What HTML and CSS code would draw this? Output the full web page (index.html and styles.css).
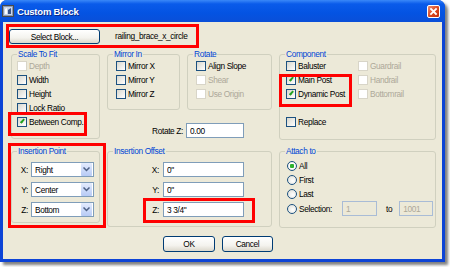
FILE: index.html
```html
<!DOCTYPE html>
<html lang="en">
<head>
  <meta charset="UTF-8">
  <title>Custom Block</title>
  <link rel="stylesheet" href="styles.css">
</head>
<body>
  <div class="win">
    <div class="titlebar">
      <svg class="ticon" width="12" height="12" viewBox="0 0 12 12">
        <rect x="0.5" y="0.5" width="11" height="11" fill="#8C9AB4" stroke="#4A4A4A"/>
        <rect x="2" y="2" width="8" height="8" fill="#C9D6EC"/>
        <path d="M3 9 L3 4 L5 3 L5 9 Z" fill="#fff"/>
        <path d="M6 9 L6 5 L9 3 L9 9 Z" fill="#3A5488"/>
      </svg>
      <span class="title">Custom Block</span>
      <span class="close">
        <svg width="11" height="11" viewBox="0 0 11 11"><path d="M3 3 L8 8 M8 3 L3 8" stroke="#fff" stroke-width="1.8" stroke-linecap="square"/></svg>
      </span>
    </div>

    <div class="client">
      <div class="head">
        <button class="btn btn-sel">Select Block...</button>
        <span class="blockname">railing_brace_x_circle</span>
      </div>

      <div class="grid">
        <fieldset class="g scale">
          <legend>Scale To Fit</legend>
          <div class="list">
            <label class="chk dis"><span class="box"></span>Depth</label>
            <label class="chk"><span class="box"></span>Width</label>
            <label class="chk"><span class="box"></span>Height</label>
            <label class="chk"><span class="box"></span>Lock Ratio</label>
            <label class="chk on"><span class="box"></span>Between Comp.</label>
          </div>
        </fieldset>

        <fieldset class="g mirror">
          <legend>Mirror In</legend>
          <div class="list">
            <label class="chk"><span class="box"></span>Mirror X</label>
            <label class="chk"><span class="box"></span>Mirror Y</label>
            <label class="chk"><span class="box"></span>Mirror Z</label>
          </div>
        </fieldset>

        <fieldset class="g rotate">
          <legend>Rotate</legend>
          <div class="list">
            <label class="chk"><span class="box"></span>Align Slope</label>
            <label class="chk dis"><span class="box"></span>Shear</label>
            <label class="chk dis"><span class="box"></span>Use Origin</label>
          </div>
        </fieldset>

        <fieldset class="g comp">
          <legend>Component</legend>
          <div class="cols">
            <label class="chk"><span class="box"></span>Baluster</label>
            <label class="chk dis"><span class="box"></span>Guardrail</label>
            <label class="chk on"><span class="box"></span>Main Post</label>
            <label class="chk dis"><span class="box"></span>Handrail</label>
            <label class="chk on"><span class="box"></span>Dynamic Post</label>
            <label class="chk dis"><span class="box"></span>Bottomrail</label>
            <span></span><span></span>
            <label class="chk"><span class="box"></span>Replace</label>
          </div>
        </fieldset>

        <div class="rotz">
          <span class="lbl">Rotate Z:</span>
          <input class="txt w58" value="0.00">
        </div>

        <fieldset class="g ipoint">
          <legend>Insertion Point</legend>
          <div class="rows">
            <div class="row"><span class="lbl l16">X:</span><div class="dd"><span>Right</span><i><svg width="7" height="5" viewBox="0 0 7 5"><path d="M0.5 0.5 L3.5 3.5 L6.5 0.5" stroke="#4D6185" stroke-width="1.5" fill="none"/></svg></i></div></div>
            <div class="row"><span class="lbl l16">Y:</span><div class="dd"><span>Center</span><i><svg width="7" height="5" viewBox="0 0 7 5"><path d="M0.5 0.5 L3.5 3.5 L6.5 0.5" stroke="#4D6185" stroke-width="1.5" fill="none"/></svg></i></div></div>
            <div class="row"><span class="lbl l16">Z:</span><div class="dd"><span>Bottom</span><i><svg width="7" height="5" viewBox="0 0 7 5"><path d="M0.5 0.5 L3.5 3.5 L6.5 0.5" stroke="#4D6185" stroke-width="1.5" fill="none"/></svg></i></div></div>
          </div>
        </fieldset>

        <fieldset class="g ioff">
          <legend>Insertion Offset</legend>
          <div class="rows">
            <div class="row"><span class="lbl l51">X:</span><input class="txt w81" value="0&quot;"></div>
            <div class="row"><span class="lbl l51">Y:</span><input class="txt w81" value="0&quot;"></div>
            <div class="row"><span class="lbl l51">Z:</span><input class="txt w81" value="3 3/4&quot;"></div>
          </div>
        </fieldset>

        <fieldset class="g attach">
          <legend>Attach to</legend>
          <div class="list">
            <label class="rad on"><span class="dot"></span>All</label>
            <label class="rad"><span class="dot"></span>First</label>
            <label class="rad"><span class="dot"></span>Last</label>
            <div class="rad selrow"><span class="dot"></span><span class="sel-lbl">Selection:</span><input class="txt dis w35" value="1" disabled><span class="to">to</span><input class="txt dis w34" value="1001" disabled></div>
          </div>
        </fieldset>
      </div>

      <div class="btns">
        <button class="btn btn-ok">OK</button>
        <button class="btn btn-cancel">Cancel</button>
      </div>
    </div>

    <!-- red highlight marks drawn over the screenshot -->
    <div class="mark m-head"></div>
    <div class="mark m-between"></div>
    <div class="mark m-post"></div>
    <div class="mark m-ipoint"></div>
    <div class="mark m-z"></div>
  </div>
</body>
</html>
```

FILE: styles.css
```css
*, *::before, *::after { box-sizing:border-box; margin:0; padding:0; }
html, body { width:100%; height:100%; overflow:hidden; background:#fff; }
body { font-family:'Liberation Sans', Arial, sans-serif; font-size:8.3px; letter-spacing:-0.35px; color:#000; }

.win {
  position:relative; width:445px; height:262px;
  display:flex; flex-direction:column;
  background:#0D44D6; border-radius:7px 7px 0 0;
  box-shadow:3px 3px 3px rgba(0,0,0,0.5);
}
.titlebar {
  height:22px; display:flex; align-items:center; padding:0 5px 0 2px;
  background:linear-gradient(#3A88F8, #0A5BEA 18%, #0453E2 60%, #0A4FD8);
  border-radius:7px 7px 0 0; color:#fff;
}
.ticon { margin-right:3px; }
.title { flex:1; font-weight:bold; font-size:9.5px; letter-spacing:-0.2px; text-shadow:1px 1px #0B2A8A; }
.close {
  width:13px; height:13px; display:flex; align-items:center; justify-content:center;
  border:1px solid #fff; border-radius:2px;
  background:linear-gradient(135deg, #EE8A6E, #D9461C 55%, #C2300E);
}

.client {
  flex:1; margin:0 3px 3px; background:#ECE9D8;
  display:flex; flex-direction:column;
}
.head { height:27px; padding:7px 0 0 6px; display:flex; align-items:flex-start; gap:15px; }
.blockname { line-height:15px; }

.btn {
  font:inherit; letter-spacing:inherit; color:#000;
  border:1px solid #003C74; border-radius:3px;
  background:linear-gradient(#fff, #F4F3EE 60%, #DCD8CC);
}
.btn-sel { width:91px; height:15px; }

.grid {
  display:grid; padding-left:8px;
  grid-template-columns:89px 73px 85px 157px; column-gap:7px;
  grid-template-rows:61px 29px auto;
}
.g { border:1px solid #D0D0BF; border-radius:3px; min-width:0; }
.g legend { color:#0046D5; line-height:10px; padding:0 1px; margin-left:5px; }

.scale { grid-column:1; grid-row:1 / 3; height:90px; }
.mirror { grid-column:2; grid-row:1; height:61px; }
.rotate { grid-column:3; grid-row:1; height:61px; }
.comp { grid-column:4; grid-row:1 / 3; height:91px; }
.ipoint { grid-column:1; grid-row:3; height:77px; margin-top:7px; }
.ioff { grid-column:2 / 4; grid-row:3; height:81px; margin-top:7px; }
.attach { grid-column:4; grid-row:3; height:82px; margin-top:7px; }

.list { padding-left:8px; }
.scale .list { padding-left:5px; }
.attach .list { padding:3px 0 0 7px; }
.cols { display:grid; grid-template-columns:72px 1fr; grid-auto-rows:14px; padding-left:6px; }

.chk, .rad { display:flex; align-items:center; height:14px; gap:2px; }
.box {
  width:10px; height:10px; border:1px solid #1C5180;
  background:linear-gradient(135deg, #D8D7CE, #fff);
  display:flex; align-items:center; justify-content:center;
}
.chk.on .box::after {
  content:""; width:5px; height:2px; margin-top:-2px;
  border-left:2px solid #21A121; border-bottom:2px solid #21A121;
  transform:rotate(-48deg);
}
.chk.dis { color:#ACA899; }
.chk.dis .box { border-color:#D8D5C8; background:#fff; }

.dot {
  width:10px; height:10px; border-radius:50%; border:1px solid #1C5180;
  background:radial-gradient(circle at 60% 60%, #fff, #DCDCD4);
}
.rad.on .dot { background:radial-gradient(circle, #2DB02D 0 2px, #fff 2.5px, #DCDCD4); }
.selrow { height:15px; }
.sel-lbl { width:41px; }
.to { margin:0 5px 0 7px; }

.rotz { grid-column:2 / 4; grid-row:2; align-self:end; margin-bottom:1px; display:flex; align-items:center; gap:3px; padding-left:41px; }
.rotz .lbl { width:35px; text-align:right; }

.rows { display:flex; flex-direction:column; gap:5px; padding-top:6px; }
.row { display:flex; align-items:center; gap:3px; }
.lbl.l16 { width:16px; text-align:right; }
.lbl.l51 { width:51px; text-align:right; margin-right:1px; }

.txt {
  height:15px; border:1px solid #7F9DB9; background:#fff;
  font:inherit; letter-spacing:inherit; color:#000; padding:0 3px; outline:none;
}
.txt.dis { background:#ECE9D8; border-color:#A9BCD6; color:#ACA899; }
.w58 { width:58px; }
.w81 { width:81px; }
.w35 { width:35px; }
.w34 { width:34px; }

.dd {
  width:63px; height:15px; display:flex; align-items:center;
  border:1px solid #7F9DB9; background:#fff; padding:0 1px 0 3px;
}
.dd span { flex:1; }
.dd i {
  width:11px; height:13px; display:flex; align-items:center; justify-content:center;
  background:linear-gradient(#E4ECFE, #B7CAF5); border-radius:1px;
}

.btns { display:flex; justify-content:center; gap:7px; padding-right:9px; margin-top:8px; }
.btn-ok { width:52px; height:16px; }
.btn-cancel { width:51px; height:16px; }

.mark { position:absolute; border:3px solid #F00; }
.m-head { left:6px; top:24px; width:193px; height:24px; }
.m-between { left:8px; top:112px; width:79px; height:24px; }
.m-post { left:279px; top:74px; width:73px; height:33px; }
.m-ipoint { left:8px; top:143px; width:98px; height:85px; }
.m-z { left:143px; top:198px; width:112px; height:25px; }
```
